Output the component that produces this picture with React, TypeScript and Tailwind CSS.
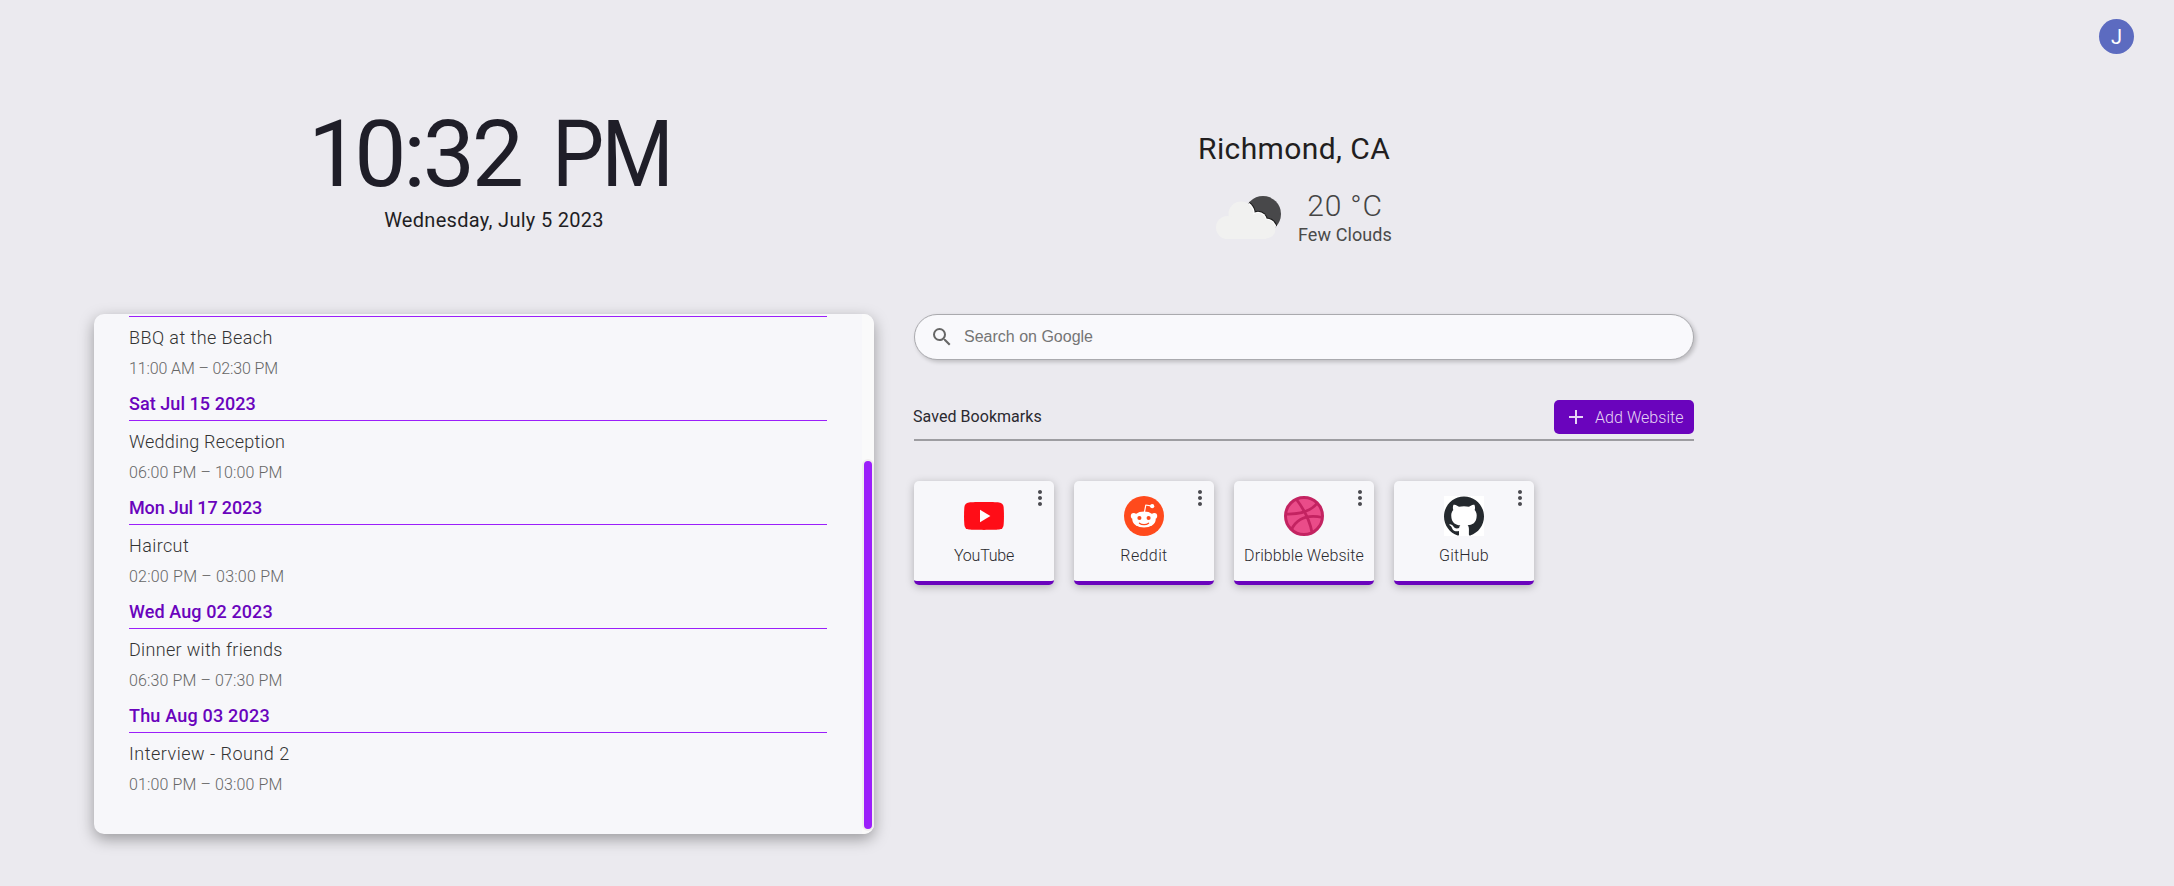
import type { ReactNode } from "react";
import { MdAdd, MdMoreVert, MdSearch } from "react-icons/md";
import { SiGithub } from "react-icons/si";

type EventItem = {
  title: string;
  titleTracking: string;
  time: string;
  timeTracking: string;
  nextDate?: string;
  dateTracking?: string;
};

const events: EventItem[] = [
  { title: "BBQ at the Beach", titleTracking: "tracking-[0.42px]", time: "11:00 AM – 02:30 PM", timeTracking: "tracking-[-0.12px]", nextDate: "Sat Jul 15 2023", dateTracking: "tracking-[0.05px]" },
  { title: "Wedding Reception", titleTracking: "tracking-[0.2px]", time: "06:00 PM – 10:00 PM", timeTracking: "tracking-[0.12px]", nextDate: "Mon Jul 17 2023", dateTracking: "tracking-[-0.15px]" },
  { title: "Haircut", titleTracking: "tracking-[0.4px]", time: "02:00 PM – 03:00 PM", timeTracking: "tracking-[0.22px]", nextDate: "Wed Aug 02 2023", dateTracking: "tracking-[0.1px]" },
  { title: "Dinner with friends", titleTracking: "tracking-[0.33px]", time: "06:30 PM – 07:30 PM", timeTracking: "tracking-[0.12px]", nextDate: "Thu Aug 03 2023", dateTracking: "tracking-[0.2px]" },
  { title: "Interview - Round 2", titleTracking: "tracking-[0.5px]", time: "01:00 PM – 03:00 PM", timeTracking: "tracking-[0.12px]" },
];

function YouTubeIcon() {
  return (
    <svg width="40" height="40" viewBox="0 0 40 40">
      <path d="M5 6.4C10 5.9 30 5.9 35 6.4C38 6.8 39.3 8.2 39.6 11C40.1 16 40.1 24 39.6 29C39.3 31.8 38 33.2 35 33.6C30 34.1 10 34.1 5 33.6C2 33.2 0.7 31.8 0.4 29C-0.1 24 -0.1 16 0.4 11C0.7 8.2 2 6.8 5 6.4Z" fill="#ff0d17" />
      <path d="M16 13.7L26.4 20L16 26.3Z" fill="#fff" />
    </svg>
  );
}

function RedditIcon() {
  return (
    <svg width="40" height="40" viewBox="0 0 40 40">
      <circle cx="20" cy="20" r="20" fill="#ff4a1c" />
      <path d="M20.3 17L21.8 9L28 10.2" fill="none" stroke="#fff" strokeWidth="1.2" strokeLinejoin="round" />
      <circle cx="28.2" cy="10.2" r="2.1" fill="#fff" />
      <circle cx="9.7" cy="20" r="2.9" fill="#fff" />
      <circle cx="30.3" cy="20" r="2.9" fill="#fff" />
      <ellipse cx="20" cy="23.6" rx="11.7" ry="8" fill="#fff" />
      <circle cx="15.4" cy="22" r="2.05" fill="#ff4a1c" />
      <circle cx="24.6" cy="22" r="2.05" fill="#ff4a1c" />
      <path d="M15.4 27.2C17.8 29.2 22.2 29.2 24.6 27.2" fill="none" stroke="#ff4a1c" strokeWidth="1.2" strokeLinecap="round" />
    </svg>
  );
}

function DribbbleIcon() {
  return (
    <svg width="40" height="40" viewBox="0 0 40 40">
      <circle cx="20" cy="20" r="18.5" fill="#ea4c89" stroke="#c32361" strokeWidth="3" />
      <g fill="none" stroke="#c32361" strokeWidth="2.8">
        <path d="M1.5 18C15 18.5 27 15.5 33.8 6.5" />
        <path d="M12.5 3.5C19 12 25.5 23 28 36.5" />
        <path d="M7.5 33.5C13 22.5 23 18.2 38.5 21.5" />
      </g>
    </svg>
  );
}

function GitHubIcon() {
  return (
    <span className="block bg-white">
      <SiGithub size={40} color="#24292e" />
    </span>
  );
}

function FewCloudsIcon() {
  return (
    <svg width="68" height="46" viewBox="0 0 68 46" className="block">
      <defs>
        <clipPath id="moon">
          <circle cx="49" cy="20" r="18" />
        </clipPath>
      </defs>
      <circle cx="49" cy="20" r="18" fill="#48484a" />
      <g clipPath="url(#moon)">
        <g fill="#1c1c1c">
          <circle cx="27" cy="20" r="14.8" />
          <circle cx="44" cy="26.5" r="9.8" />
          <circle cx="52" cy="35" r="11.6" />
        </g>
        <g fill="#fff">
          <circle cx="27" cy="20" r="13.8" />
          <circle cx="44" cy="26.5" r="8.8" />
          <circle cx="52" cy="35" r="10.6" />
        </g>
      </g>
      <g fill="#f1f1f0">
        <circle cx="27" cy="20" r="12.5" />
        <circle cx="13.5" cy="33.5" r="11.5" />
        <circle cx="44" cy="26.5" r="7.5" />
        <circle cx="52" cy="35" r="9.5" />
        <path d="M13.5 25H52V45H13.5Z" />
      </g>
    </svg>
  );
}

const bookmarks: { name: string; tracking: string; icon: ReactNode }[] = [
  { name: "YouTube", tracking: "tracking-[-0.2px]", icon: <YouTubeIcon /> },
  { name: "Reddit", tracking: "tracking-[0.4px]", icon: <RedditIcon /> },
  { name: "Dribbble Website", tracking: "tracking-[0.1px]", icon: <DribbbleIcon /> },
  { name: "GitHub", tracking: "tracking-[0.2px]", icon: <GitHubIcon /> },
];

function Clock() {
  return (
    <section className="flex h-full flex-col items-center pl-5">
      <h1 className="mt-[46px] flex h-[109px] w-[372px] text-[93px] leading-[109px] whitespace-pre text-[#1f1e28]">
        <span className="tracking-[-6px]">1</span>
        <span className="tracking-[-3.2px]">0:32 </span>
        <span className="ml-[11px] inline-block origin-left scale-x-[0.89] tracking-[-3px]">PM</span>
      </h1>
      <p className="h-[23px] text-xl leading-[23px] tracking-[0.3px] text-[#1f1e24]">Wednesday, July 5 2023</p>
    </section>
  );
}

function Weather() {
  return (
    <section className="flex flex-col items-start pt-[77px] pl-[284px]">
      <h2 className="h-[36px] text-[30px] leading-[36px] tracking-[0.4px] text-[#221e20]">Richmond, CA</h2>
      <div className="mt-[22px] flex">
        <div className="ml-[16px] pt-[5px]">
          <FewCloudsIcon />
        </div>
        <div className="ml-[16px] flex w-[94px] flex-col items-center">
          <span className="h-[34px] text-[30px] leading-[34px] font-light tracking-[0.8px] text-[#444]">20 °C</span>
          <span className="h-[24px] text-lg leading-[24px] tracking-[0.1px] whitespace-nowrap text-[#4a4a4a]">Few Clouds</span>
        </div>
      </div>
    </section>
  );
}

function Agenda() {
  return (
    <section className="flex h-[520px] overflow-hidden rounded-[10px] bg-[#f7f7fa] shadow-[0_5px_15px_rgba(0,0,0,0.35)]">
      <div className="flex-1 px-[35px] pt-[2px]">
        <div className="h-px bg-[#9b1ffa]" />
        {events.map((e) => (
          <article key={e.title}>
            <div className={`h-[42px] text-lg leading-[42px] font-light text-[#333] ${e.titleTracking}`}>{e.title}</div>
            <div className={`h-[19px] text-base leading-[19px] font-light text-[#666] ${e.timeTracking}`}>{e.time}</div>
            {e.nextDate && (
              <h3 className={`mt-[11px] h-8 border-b border-[#9b1ffa] text-lg leading-[29px] font-[470] text-[#6a04bd] ${e.dateTracking}`}>{e.nextDate}</h3>
            )}
          </article>
        ))}
      </div>
      <div className="w-3 bg-[#fafafa] pt-[145px]">
        <div className="h-[372px] rounded-[10px] border-2 border-[#f0eeee] bg-[#9b1ffa]" />
      </div>
    </section>
  );
}

function Bookmarks() {
  return (
    <section className="flex flex-col">
      <div className="flex h-[46px] items-center rounded-full border border-[#aaaaae] bg-[#f9f9fc] pl-[15px] shadow-[2px_2px_4px_rgba(0,0,0,0.2)]">
        <MdSearch size={24} color="#666" />
        <span className="ml-[10px] font-['Liberation_Sans',sans-serif] text-base leading-6 text-[#757575]">Search on Google</span>
      </div>
      <div className="mt-[40px] flex h-[41px] items-start justify-between border-b-2 border-[#9d9da1]">
        <h2 className="-ml-px text-base leading-[33px] tracking-[0.05px] text-[#2a2930]">Saved Bookmarks</h2>
        <button className="flex h-[34px] w-[140px] items-center rounded-[5px] bg-[#6a04bd] pl-[10px] text-[#e6d6f4]">
          <MdAdd size={24} />
          <span className="ml-[7px] text-base leading-[33px] font-[350] tracking-[0.05px] whitespace-nowrap">Add Website</span>
        </button>
      </div>
      <div className="mt-[40px] flex gap-5">
        {bookmarks.map((b) => (
          <div key={b.name} className="relative flex h-[104px] w-[140px] flex-col items-center rounded-[5px] border-b-4 border-[#6a04bd] bg-[#f7f7fa] pt-[15px] shadow-[0_2px_8px_rgba(0,0,0,0.25)]">
            {b.icon}
            <MdMoreVert size={24} color="#4b4b50" className="absolute top-[5px] right-[2px]" />
            <span className={`mt-[10px] text-base leading-[20px] font-light whitespace-nowrap text-[#2a2a2e] ${b.tracking}`}>{b.name}</span>
          </div>
        ))}
      </div>
    </section>
  );
}

export default function App() {
  return (
    <main className="flex h-[886px] w-[2174px] flex-col overflow-hidden bg-[#ebeaef] font-['Roboto',sans-serif]">
      <header className="flex h-[54px] items-end justify-end pr-10">
        <div className="flex size-[35px] items-center justify-center rounded-full bg-[#5c6bc0] text-xl leading-none text-white">J</div>
      </header>
      <div className="ml-[94px] grid w-[1600px] grid-cols-[780px_780px] grid-rows-[260px_520px] gap-x-10">
        <Clock />
        <Weather />
        <Agenda />
        <Bookmarks />
      </div>
    </main>
  );
}
